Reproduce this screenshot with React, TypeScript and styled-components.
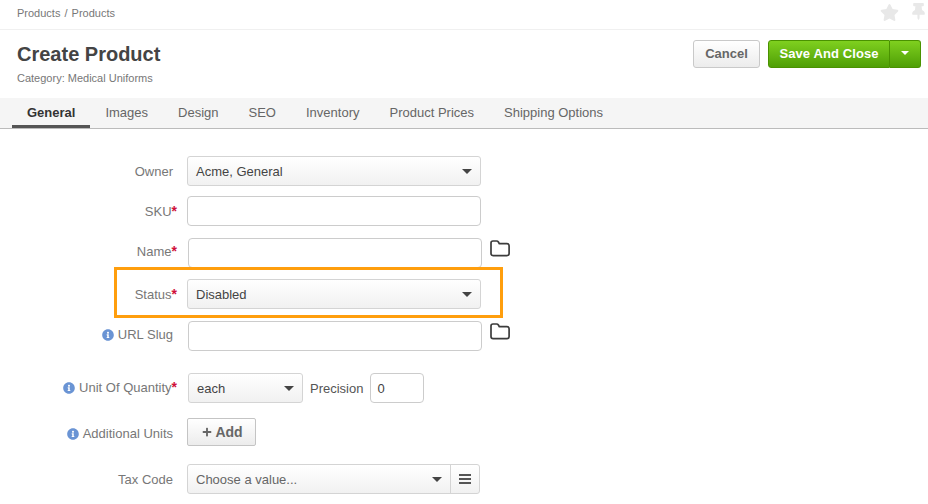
import React from "react";
import styled, { createGlobalStyle } from "styled-components";
import { FaInfoCircle, FaPlus, FaStar, FaThumbtack } from "react-icons/fa";

const GlobalStyle = createGlobalStyle`
  html, body {
    margin: 0;
    padding: 0;
    background: #fff;
    overflow: hidden;
  }
  body {
    font-family: "Liberation Sans", Arial, sans-serif;
    color: #444;
  }
`;

const Page = styled.div`
  width: 928px;
  height: 504px;
  overflow: hidden;
`;

const TopBar = styled.div`
  height: 29px;
  box-sizing: border-box;
  padding: 7px 1px 0 17px;
  display: flex;
  justify-content: space-between;
  align-items: flex-start;
`;

const Breadcrumbs = styled.div`
  font-size: 11px;
  line-height: 13px;
  color: #777;
  word-spacing: 1px;
`;

const TopIcons = styled.div`
  display: flex;
  gap: 11px;
  margin-top: -4px;
  color: #e8e8e8;
  font-size: 19px;
  line-height: 0;
`;

const Header = styled.div`
  height: 69px;
  box-sizing: border-box;
  border-top: 1px solid #f0f0f0;
  padding: 10px 7px 0 17px;
  display: flex;
  justify-content: space-between;
  align-items: flex-start;
`;

const Title = styled.h1`
  margin: 2px 0 0;
  font-size: 20px;
  line-height: 25px;
  font-weight: 700;
  color: #444;
`;

const Subtitle = styled.div`
  margin-top: 5px;
  font-size: 11px;
  line-height: 13px;
  color: #777;
`;

const Actions = styled.div`
  display: flex;
  gap: 8px;
`;

const CancelButton = styled.button`
  width: 67px;
  height: 28px;
  padding: 0 0 2px;
  font: 700 13px "Liberation Sans", Arial, sans-serif;
  color: #666;
  background: linear-gradient(#fff, #ececec);
  border: 1px solid #c9c9c9;
  border-radius: 3px;
`;

const SaveGroup = styled.div`
  display: flex;
  height: 28px;
`;

const SaveButton = styled.button<{ $caret?: boolean }>`
  height: 28px;
  width: ${(p) => (p.$caret ? "31px" : "122px")};
  padding: 0 0 2px;
  display: flex;
  align-items: center;
  justify-content: center;
  font: 700 13px "Liberation Sans", Arial, sans-serif;
  letter-spacing: 0.1px;
  color: #fff;
  background: linear-gradient(#7fd01f, #4f9f06);
  border: 1px solid #4a9200;
  border-left-width: ${(p) => (p.$caret ? "0" : "1px")};
  border-radius: ${(p) => (p.$caret ? "0 3px 3px 0" : "3px 0 0 3px")};
`;

const Caret = styled.span<{ $light?: boolean }>`
  display: inline-block;
  width: 0;
  height: 0;
  border-left: ${(p) => (p.$light ? "4px" : "5px")} solid transparent;
  border-right: ${(p) => (p.$light ? "4px" : "5px")} solid transparent;
  border-top: ${(p) => (p.$light ? "4px" : "5px")} solid ${(p) => (p.$light ? "#fff" : "#444")};
`;

const Tabs = styled.div`
  height: 31px;
  box-sizing: border-box;
  background: #f5f5f5;
  border-bottom: 1px solid #bbb;
  padding-left: 12px;
  display: flex;
`;

const Tab = styled.div<{ $active?: boolean }>`
  height: 30px;
  box-sizing: border-box;
  padding: 7px 15px 0;
  font-size: 13px;
  line-height: 15px;
  font-weight: ${(p) => (p.$active ? 700 : 400)};
  color: ${(p) => (p.$active ? "#333" : "#666")};
  border-bottom: 3px solid ${(p) => (p.$active ? "#555" : "transparent")};
`;

const Form = styled.div`
  padding-top: 27px;
`;

const Row = styled.div<{ $gap: number }>`
  position: relative;
  display: flex;
  align-items: flex-start;
  margin-top: ${(p) => p.$gap}px;
`;

const Label = styled.div<{ $required?: boolean; $top?: number }>`
  width: 177px;
  flex: none;
  box-sizing: border-box;
  margin-right: 10px;
  padding-top: ${(p) => p.$top ?? 8}px;
  padding-right: ${(p) => (p.$required ? "0" : "4px")};
  display: flex;
  justify-content: flex-end;
  align-items: center;
  font-size: 13px;
  line-height: 15px;
  color: #777;
`;

const Star = styled.span`
  color: #d0103a;
  font-size: 14px;
  font-weight: 700;
`;

const InfoIcon = styled(FaInfoCircle)`
  color: #6a94d4;
  font-size: 12px;
  margin-right: 4px;
`;

const Select = styled.div<{ $width: number; $shift?: number }>`
  width: ${(p) => p.$width}px;
  height: 30px;
  box-sizing: border-box;
  margin-left: ${(p) => p.$shift ?? 0}px;
  padding: 0 8px 0 8px;
  display: flex;
  align-items: center;
  justify-content: space-between;
  font-size: 13px;
  color: #444;
  background: linear-gradient(#fff, #f1f1f1);
  border: 1px solid #d4d4d4;
  border-radius: 3px;
`;

const Input = styled.div<{ $width: number; $shift?: number }>`
  width: ${(p) => p.$width}px;
  height: 30px;
  box-sizing: border-box;
  margin-left: ${(p) => p.$shift ?? 0}px;
  padding: 0 6px;
  display: flex;
  align-items: center;
  font-size: 13px;
  color: #444;
  background: #fff;
  border: 1px solid #ccc;
  border-radius: 4px;
`;

const FolderIcon = styled.svg`
  width: 20px;
  height: 17px;
  margin: 2px 0 0 8px;
  flex: none;
`;

const PrecisionLabel = styled.span`
  margin: 8px 7px 0 7px;
  font-size: 13px;
  line-height: 15px;
  color: #555;
`;

const AddButton = styled.button`
  width: 69px;
  height: 28px;
  padding: 0 0 0 2px;
  display: flex;
  align-items: center;
  justify-content: center;
  gap: 3px;
  font: 700 14px "Liberation Sans", Arial, sans-serif;
  color: #666;
  background: linear-gradient(#fff, #ececec);
  border: 1px solid #c4c4c4;
  border-radius: 2px;
`;

const PlusIcon = styled(FaPlus)`
  font-size: 10px;
`;

const ComboGroup = styled.div`
  display: flex;
  width: 293px;
  height: 30px;
  box-sizing: border-box;
  background: linear-gradient(#fff, #f1f1f1);
  border: 1px solid #d4d4d4;
  border-radius: 3px;
  font-size: 13px;
  color: #666;
`;

const ComboValue = styled.div`
  flex: 1;
  padding: 0 8px;
  display: flex;
  align-items: center;
  justify-content: space-between;
`;

const ComboSide = styled.div`
  width: 28px;
  border-left: 1px solid #d4d4d4;
  display: flex;
  flex-direction: column;
  align-items: center;
  justify-content: center;
  gap: 2px;
`;

const ComboLine = styled.span`
  width: 12px;
  height: 2px;
  background: #555;
`;

const Highlight = styled.div`
  position: absolute;
  left: 114px;
  top: -12px;
  width: 389px;
  height: 51px;
  box-sizing: border-box;
  border: 3px solid #ff9e0d;
  pointer-events: none;
`;

const TABS = [
  "General",
  "Images",
  "Design",
  "SEO",
  "Inventory",
  "Product Prices",
  "Shipping Options",
];

const Folder: React.FC = () => (
  <FolderIcon viewBox="0 0 20 17" fill="none" stroke="#3c3c3c" strokeWidth="1.7">
    <path d="M1 3C1 1.9 1.8 1 3 1h3.6c.9 0 1.4.4 1.8 1l.9 1.6h7.5c1.4 0 2.3.8 2.3 2.2v7.7c0 1.3-.9 2.1-2.2 2.1H3.1C1.9 15.6 1 14.8 1 13.5z" />
  </FolderIcon>
);

const App: React.FC = () => {
  return (
    <Page>
      <GlobalStyle />
      <TopBar>
        <Breadcrumbs>Products / Products</Breadcrumbs>
        <TopIcons>
          <FaStar />
          <FaThumbtack size={17} />
        </TopIcons>
      </TopBar>
      <Header>
        <div>
          <Title>Create Product</Title>
          <Subtitle>Category: Medical Uniforms</Subtitle>
        </div>
        <Actions>
          <CancelButton>Cancel</CancelButton>
          <SaveGroup>
            <SaveButton>Save And Close</SaveButton>
            <SaveButton $caret>
              <Caret $light />
            </SaveButton>
          </SaveGroup>
        </Actions>
      </Header>
      <Tabs>
        {TABS.map((tab, i) => (
          <Tab key={tab} $active={i === 0}>
            {tab}
          </Tab>
        ))}
      </Tabs>
      <Form>
        <Row $gap={0}>
          <Label>Owner</Label>
          <Select $width={294}>
            Acme, General
            <Caret />
          </Select>
        </Row>
        <Row $gap={10}>
          <Label $required>
            SKU<Star>*</Star>
          </Label>
          <Input $width={294} />
        </Row>
        <Row $gap={12}>
          <Label $required $top={6}>
            Name<Star>*</Star>
          </Label>
          <Input $width={294} $shift={1} />
          <Folder />
        </Row>
        <Row $gap={11}>
          <Label $required>
            Status<Star>*</Star>
          </Label>
          <Select $width={294}>
            Disabled
            <Caret />
          </Select>
          <Highlight />
        </Row>
        <Row $gap={12}>
          <Label $top={6}>
            <InfoIcon />
            URL Slug
          </Label>
          <Input $width={294} $shift={1} />
          <Folder />
        </Row>
        <Row $gap={22}>
          <Label $required $top={7}>
            <InfoIcon />
            Unit Of Quantity<Star>*</Star>
          </Label>
          <Select $width={115} $shift={1}>
            each
            <Caret />
          </Select>
          <PrecisionLabel>Precision</PrecisionLabel>
          <Input $width={54}>0</Input>
        </Row>
        <Row $gap={15}>
          <Label>
            <InfoIcon />
            Additional Units
          </Label>
          <AddButton>
            <PlusIcon />
            Add
          </AddButton>
        </Row>
        <Row $gap={18}>
          <Label>Tax Code</Label>
          <ComboGroup>
            <ComboValue>
              Choose a value...
              <Caret />
            </ComboValue>
            <ComboSide>
              <ComboLine />
              <ComboLine />
              <ComboLine />
            </ComboSide>
          </ComboGroup>
        </Row>
      </Form>
    </Page>
  );
};

export default App;
